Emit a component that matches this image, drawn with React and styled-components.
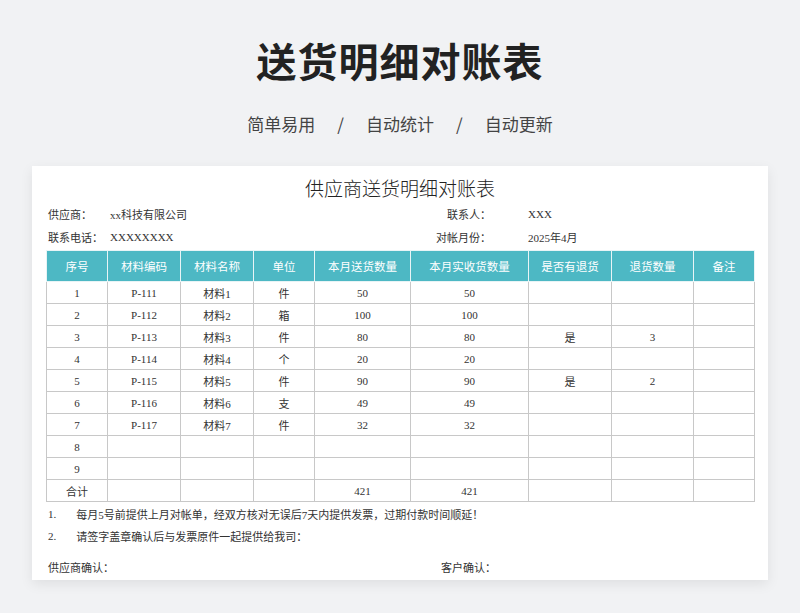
import React from "react";
import styled, { createGlobalStyle } from "styled-components";

const G = createGlobalStyle`
  body{margin:0;background:#f1f2f4;font-family:"Liberation Serif","Noto Sans CJK SC",serif;}
`;
const Page = styled.div`width:800px;height:613px;display:flex;flex-direction:column;align-items:center;overflow:hidden;`;
const H1 = styled.h1`margin:34px 0 0;height:52px;font:bold 40px/52px "Noto Sans CJK SC",sans-serif;color:#222;letter-spacing:1px;`;
const Sub = styled.div`margin-top:26px;height:24px;font:17px/24px "Noto Sans CJK SC",sans-serif;color:#444;display:flex;gap:22px;`;
const Card = styled.div`margin-top:30px;width:736px;height:414px;background:#fff;box-shadow:0 4px 12px rgba(0,0,0,.08);box-sizing:border-box;padding:8px 14px 0;display:flex;flex-direction:column;color:#333;font-size:11px;`;
const CT = styled.div`text-align:center;font:19px/28px "Noto Sans CJK SC",sans-serif;font-weight:300;color:#222;`;
const Info = styled.div`display:grid;grid-template-columns:62px 300px 81px 1fr;height:24px;align-items:center;padding-left:2px;`;
const Cell = styled.span`text-align:${p=>p.$r?"right":"left"};padding-left:${p=>p.$v?"37px":"0"};`;
const Table = styled.table`border-collapse:collapse;width:708px;margin-top:2px;table-layout:fixed;
  td,th{border:1px solid #c8c8c8;text-align:center;padding:0;}
  th{background:#4db8c4;color:#fff;font-weight:normal;height:30px;border-color:#e8f4f6;font-size:11.5px;}
  td{height:21px;}`;
const Note = styled.div`height:23px;display:flex;align-items:center;padding-left:2px;gap:20px;`;
const Sign = styled.div`display:grid;grid-template-columns:393px 1fr;height:26px;align-items:center;margin-top:8px;padding-left:2px;`;

const widths=[61,73,73,61,96,118,83,82,61];
const heads=["序号","材料编码","材料名称","单位","本月送货数量","本月实收货数量","是否有退货","退货数量","备注"];
const rows=[
["1","P-111","材料1","件","50","50","",""],
["2","P-112","材料2","箱","100","100","",""],
["3","P-113","材料3","件","80","80","是","3"],
["4","P-114","材料4","个","20","20","",""],
["5","P-115","材料5","件","90","90","是","2"],
["6","P-116","材料6","支","49","49","",""],
["7","P-117","材料7","件","32","32","",""],
["8"],["9"],["合计","","","","421","421"]];

export default function App(){return(<Page><G/>
<H1>送货明细对账表</H1>
<Sub><span>简单易用</span><span>/</span><span>自动统计</span><span>/</span><span>自动更新</span></Sub>
<Card>
<CT>供应商送货明细对账表</CT>
<Info><Cell>供应商：</Cell><Cell>xx科技有限公司</Cell><Cell $r>联系人：</Cell><Cell $v>XXX</Cell></Info>
<Info><Cell>联系电话：</Cell><Cell>XXXXXXXX</Cell><Cell $r>对帐月份：</Cell><Cell $v>2025年4月</Cell></Info>
<Table><colgroup>{widths.map((w,i)=><col key={i} style={{width:w}}/>)}</colgroup>
<thead><tr>{heads.map(h=><th key={h}>{h}</th>)}</tr></thead>
<tbody>{rows.map((r,i)=><tr key={i}>{heads.map((_,j)=><td key={j}>{r[j]||""}</td>)}</tr>)}</tbody></Table>
<Note><span>1.</span><span>每月5号前提供上月对帐单，经双方核对无误后7天内提供发票，过期付款时间顺延！</span></Note>
<Note><span>2.</span><span>请签字盖章确认后与发票原件一起提供给我司：</span></Note>
<Sign><span>供应商确认：</span><span>客户确认：</span></Sign>
</Card></Page>);}
